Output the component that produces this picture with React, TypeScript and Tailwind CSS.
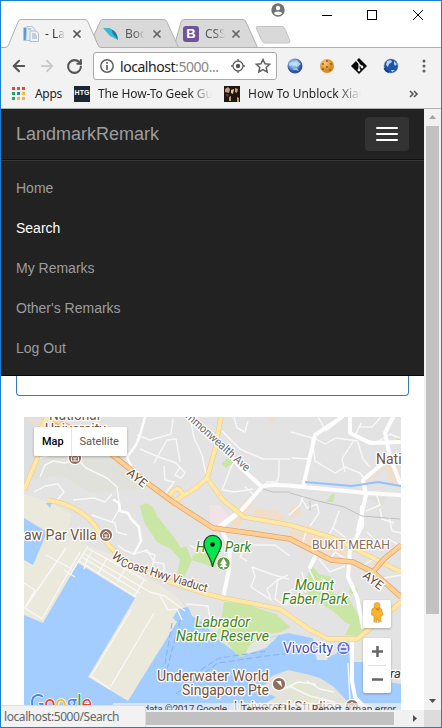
import React from "react";
import { ArrowLeft, ArrowRight, RotateCw, X } from "lucide-react";

const ui = "font-['Noto_Sans','Open_Sans',sans-serif]";

function TabShapes() {
  return (
    <svg className="absolute left-0 top-0" width="440" height="47" viewBox="1 1 440 47">
      <path d="M1 47.5H441" stroke="#b4b4b4" />
      <path d="M174 47L181 22Q182 19.500 184 19.500H243Q245 19.500 246 22L257.500 47.500H170Z" fill="#d9d9d9" stroke="#b0b0b0" />
      <path d="M94 35L100 22Q101 19.500 103 19.500H164Q166 19.500 167 22L178.500 47.500H98Z" fill="#d9d9d9" stroke="#b0b0b0" />
      <path d="M1 48V47.500H5Q7.500 47.500 8.500 45L18 22Q19 19.500 21 19.500H85Q87 19.500 88 22L98 45Q99 47.500 101 47.500V48Z" fill="#f2f2f2" />
      <path d="M1 47.500H5Q7.500 47.500 8.500 45L18 22Q19 19.500 21 19.500H85Q87 19.500 88 22L98 45Q99 47.500 101 47.500" fill="none" stroke="#b0b0b0" />
      <path d="M257 26.500H282Q284 26.500 285 29L290 41Q290 43 288 43H265Q263 43 262 41L256.500 29Q256 26.500 257 26.500Z" fill="#d9d9d9" stroke="#c4c4c4" />
    </svg>
  );
}

function TitleBar() {
  return (
    <header className="relative h-[47px] w-full bg-white">
      <TabShapes />
      <div className="relative flex h-[25px] items-start justify-end">
        <svg className="mr-[36px] mt-[2px]" width="14" height="14" viewBox="0 0 14 14">
          <circle cx="7" cy="7" r="6.700" fill="#737373" />
          <circle cx="7" cy="5" r="2.200" fill="white" />
          <path d="M2.800 10.300Q3.500 8.500 7 8.500T11.200 10.300Q9.500 12.200 7 12.200T2.800 10.300Z" fill="white" />
        </svg>
        <svg className="mr-[18px] mt-[8px]" width="102" height="12" viewBox="321 9 102 12" fill="none" stroke="black">
          <path d="M322 15.500H332" />
          <rect x="367.500" y="10.500" width="9" height="9" />
          <path d="M413 10L423 20M423 10L413 20" />
        </svg>
      </div>
      <div className={`relative flex h-[16px] items-center text-[12px] text-[#444] ${ui}`}>
        <svg className="ml-[22px] shrink-0" width="16" height="16" viewBox="0 0 16 16">
          <path d="M.5 1.500H3.500V14.500H.5Z" fill="#5b9bd0" />
          <path d="M4 .500H9L12 3V14.500H3Z" fill="#e7edf3" stroke="#b3c8dc" />
          <path d="M7 5H13L15.500 7V15.500H7Z" fill="#f1f4f6" stroke="#afbdca" />
          <path d="M5 3H8M9 8H13M9 10H14M9 12H14" stroke="#91a9bf" />
        </svg>
        <span className="ml-[6px] w-[20px] overflow-hidden whitespace-nowrap bg-linear-to-r from-[#333] from-50% to-transparent bg-clip-text text-transparent">- La</span>
        <X className="ml-[6px]" size={12} strokeWidth={3.500} color="#555" />
        <svg className="ml-[20px] shrink-0" width="16" height="16" viewBox="0 0 16 16">
          <path d="M0 2H7L14 12L15 14L7 10Z" fill="#36bad5" /><path d="M8 3Q15 6 15 14L10 8Z" fill="#247d94" />
        </svg>
        <span className="ml-[6px] w-[20px] overflow-hidden whitespace-nowrap bg-linear-to-r from-[#555] from-50% to-transparent bg-clip-text text-transparent">Boo</span>
        <X className="ml-[6px]" size={12} strokeWidth={3.500} color="#666" />
        <span className="ml-[20px] flex size-4 items-center justify-center rounded-[3px] bg-[#6f5499] font-['Liberation_Sans',sans-serif] text-[13px] font-bold text-white">B</span>
        <span className="ml-[6px] w-[20px] overflow-hidden whitespace-nowrap bg-linear-to-r from-[#555] from-50% to-transparent bg-clip-text text-transparent">CSS</span>
        <X className="ml-[5px]" size={12} strokeWidth={3.500} color="#666" />
      </div>
    </header>
  );
}

function ExtensionIcons() {
  return (
    <svg className="ml-[9px]" width="145" height="20" viewBox="286 56 145 20">
      <defs>
        <radialGradient id="globe" cx=".42" cy=".36"><stop stopColor="#cdeafa" /><stop offset=".55" stopColor="#74a8df" /><stop offset="1" stopColor="#3151a0" /></radialGradient>
        <radialGradient id="cookie" cx=".35" cy=".3"><stop stopColor="#f8cc72" /><stop offset="1" stopColor="#d98c28" /></radialGradient>
      </defs>
      <circle cx="295" cy="66" r="7.500" fill="url(#globe)" />
      <path d="M289 63L293 62L292 65L289 66M296 60L301 64L297 67L294 64M292 69L297 68L299 71" fill="#d8eefb" opacity=".65" />
      <circle cx="327" cy="66" r="7" fill="url(#cookie)" />
      {[[323, 64], [327, 61], [331, 64], [327, 67], [323, 69], [330, 70]].map(([x, y]) => <circle key={`${x}-${y}`} cx={x} cy={y} r=".900" fill="#944d12" />)}
      <path d="M359 58L367 66L359 74L351 66Z" fill="#080808" />
      <path d="M356 60L359 63.500V70M359 64L362 67" stroke="#f2f2f2" strokeWidth="1.200" /><circle cx="359" cy="70" r="1.400" fill="#f2f2f2" /><circle cx="362" cy="67" r="1.400" fill="#f2f2f2" />
      <circle cx="391" cy="66" r="7" fill="#1d54aa" stroke="#73899e" strokeWidth=".500" />
      <path d="M387 61L391 60L392 62L389 64L388 67L386 65M394 61L397 64L395 66L394 64M391 70L395 70L392 72" fill="#b9d7ed" />
      <path d="M384.500 68Q386 72 389 72" stroke="#123d87" strokeWidth="2" fill="none" />
      {[61, 66, 71].map((y) => <circle key={y} cx="424" cy={y} r="1.500" fill="#606060" />)}
    </svg>
  );
}

function Toolbar() {
  return (
    <div className="flex h-[36px] items-center bg-[#f2f2f2]">
      <ArrowLeft className="ml-[9px]" size={18} strokeWidth={2.700} color="#555" />
      <ArrowRight className="ml-[10px]" size={18} strokeWidth={2.500} color="#ccc" />
      <RotateCw className="ml-[10px]" size={17} strokeWidth={2.900} color="#555" />
      <div className={`ml-[10px] flex h-[28px] w-[184px] items-center rounded-[3px] border border-[#a9a9a9] bg-white text-[14px] ${ui}`}>
        <svg className="ml-[5px]" width="16" height="16" viewBox="0 0 16 16">
          <circle cx="8" cy="8" r="6.200" fill="none" stroke="#606060" strokeWidth="1.500" /><path d="M8 7V12M8 4V5.700" stroke="#606060" strokeWidth="1.700" />
        </svg>
        <span className="ml-[5px] w-[105px] whitespace-nowrap tracking-[-0.45px] text-[#222]">localhost<span className="text-[#888]">:5000...</span></span>
        <svg className="ml-[5px]" width="44" height="16" viewBox="230 58 44 16" fill="none" stroke="#606060" strokeWidth="1.300">
          <circle cx="238" cy="66" r="5" /><circle cx="238" cy="66" r="2.200" fill="#555" stroke="none" /><path d="M238 59V61M238 71V73M231 66H233M243 66H245" />
          <path d="M263 59.500L265 63.800L269.600 64.300L266.200 67.400L267.200 72L263 69.600L258.800 72L259.800 67.400L256.400 64.300L261 63.800Z" strokeWidth="1.500" />
        </svg>
      </div>
      <ExtensionIcons />
    </div>
  );
}

function Bookmarks() {
  const dots = ["#e34b3d", "#e34b3d", "#e34b3d", "#26a65b", "#1388dc", "#f1b83e", "#26a65b", "#f1b83e", "#f1b83e"];
  return (
    <div className={`flex h-[25px] items-center border-b border-[#b1b1b1] bg-[#f2f2f2] pb-[5px] text-[12px] text-[#222] ${ui}`}>
      <span className="ml-[11px] grid shrink-0 grid-cols-3 gap-[2px]">{dots.map((color, i) => <i key={i} className="size-[3px]" style={{ backgroundColor: color }} />)}</span>
      <span className="ml-[10px] w-[29px] tracking-[-0.3px]">Apps</span>
      <span className="ml-[10px] flex size-4 items-center justify-center bg-[#192635] font-['Liberation_Sans',sans-serif] text-[7px] font-bold text-white">HTG</span>
      <span className="ml-[8px] w-[114px] overflow-hidden whitespace-nowrap bg-linear-to-r from-[#222] from-80% to-transparent bg-clip-text tracking-[-0.12px] text-transparent">The How-To Geek Gu</span>
      <svg className="ml-[12px] shrink-0" width="16" height="16" viewBox="0 0 16 16">
        <path d="M0 0H16V16H0Z" fill="#21160f" /><path d="M1 3L4 1L6 3L5 7L1 6M11 2L14 3L13 7L11 6M5 11L7 10V15H5M13 11L15 12V16H13" fill="#bf9978" /><path d="M7 4L10 3L9 8L7 7" fill="#e0c59f" /><path d="M2 8L5 9L3 11" fill="#754a34" />
      </svg>
      <span className="ml-[8px] w-[113px] overflow-hidden whitespace-nowrap bg-linear-to-r from-[#222] from-80% to-transparent bg-clip-text text-transparent">How To Unblock Xiao</span>
      <svg className="ml-[48px]" width="10" height="8" viewBox="0 0 10 8" fill="none" stroke="#555" strokeWidth="1.600"><path d="M1 1L4 4L1 7M5 1L8 4L5 7" /></svg>
    </div>
  );
}

function Navigation() {
  const items = ["Home", "Search", "My Remarks", "Other's Remarks", "Log Out"];
  return (
    <nav className="h-[267px] shrink-0 border-b border-[#080808] bg-[#222] font-['Liberation_Sans',Arial,sans-serif] text-[#9d9d9d]">
      <div className="flex h-[51px] items-center justify-between border-b border-[#101010] pl-[15px] pr-[15px] text-[18px]">
        <span>LandmarkRemark</span>
        <button className="flex h-[34px] w-[44px] flex-col items-center justify-center gap-[4px] rounded-[4px] bg-[#333]" aria-label="Navigation menu">
          <i className="h-[2px] w-[22px] rounded-[1px] bg-white" /><i className="h-[2px] w-[22px] rounded-[1px] bg-white" /><i className="h-[2px] w-[22px] rounded-[1px] bg-white" />
        </button>
      </div>
      <div className="border-t border-[#383838] pt-[7px] text-[14px]">
        {items.map((item) => <div key={item} className={`flex h-[40px] items-center pl-[15px] ${item === "Search" ? "text-white" : ""}`}>{item}</div>)}
      </div>
    </nav>
  );
}

function MapDrawing() {
  return (
    <svg width="377" height="293" viewBox="24 417 377 293" className="block font-['Roboto',sans-serif]">
      <rect x="24" y="417" width="377" height="293" fill="#e3e3e3" />
      <path d="M24 417H46L39 450L37 464L24 490Z" fill="#dddedf" />
      <path d="M43 450L78 445L110 458L149 488L91 493L61 475L31 480Z" fill="#dfe1da" />
      <path d="M24 494L49 502L72 514L67 535L87 545L112 555L174 594L195 618L177 622L128 701L88 677L135 598L78 563L43 623L24 615Z" fill="#ebe8dc" />
      <g fill="#a3ccff">
        <path d="M24 518L47 532L33 565L24 560Z" />
        <path d="M78 563L135 598L88 677L128 701L177 622L173 618L178 609L188 607L192 616L201 621L210 630L221 642L243 657L249 645L264 639L288 633L312 638L323 656L334 655L349 643H376L370 651L365 666L370 679L401 684V710H24V615L43 623Z" />
        <path d="M46 503L52 503L50 508Z" />
      </g>
      <path d="M264 655L320 645L323 656L331 663L336 659L349 643L350 667L320 663L290 659L266 665Z" fill="#a3ccff" />
      <path d="M239 657L250 643L278 636L266 648ZM348 642L376 638L369 645L363 662L350 662Z" fill="#e6e6e1" />
      <path d="M315 653L321 647L330 652L327 660L317 660Z" fill="#e6e6e1" />
      <path d="M384 662L392 652L401 650V669L388 672Z" fill="#e3e3e3" />
      <path d="M254 688L266 684L272 676L288 670L306 674L320 678L334 687L348 702L368 704L377 710H254L276 697Z" fill="#e4e3db" />
      <path d="M285 683Q296 675 309 683L312 691L330 705L311 705L294 696Z" fill="#e4e6d4" />

      <g fill="#cae6a4">
        <path d="M140 506Q151 498 157 516L173 536L181 548L186 546L192 560L184 578L177 575L180 559L171 549L157 542L144 522Z" />
        <path d="M191 560L197 550L211 547L219 553L215 568L201 563Z" />
        <path d="M224 602L245 604L276 614L290 627L281 632L262 635L250 645L243 657L235 653L226 640L216 636L221 622Z" />
        <path d="M312 566L319 574L331 577L334 594L347 596L355 609L362 622L363 628L346 623L333 611L308 596L306 579Z" />
        <path d="M224 461L231 457L235 462L226 468L222 464ZM332 494L335 494L333 502L326 502ZM396 439L400 437V444ZM350 588L357 588L358 595L349 593Z" />
        <path d="M355 615L365 629L360 636L345 635Z" />
      </g>
      <path d="M209 505L219 505L229 516L226 527L211 528Z" fill="#f2e3e8" />
      <g fill="#f1deca">
        <path d="M245 500L253 504L244 517L239 528L230 525L237 510ZM255 507L278 511L286 520L276 523L253 518ZM290 530L309 525L323 533L345 538L349 556L321 552L290 538ZM290 508L300 504L301 514L291 519ZM365 481L389 464L400 467L400 488L389 480L387 468L367 483ZM24 419H46L44 431L40 426ZM58 420L79 428L74 435L55 427ZM265 417H279L272 424Z" />
      </g>
      <path d="M365 497H387L382 506Z" fill="#dfe1d8" />

      <g fill="none" stroke="#f8f8f8" strokeWidth="1.400" strokeLinejoin="round">
        <path d="M40 477L45 465L53 461L65 463L78 459L86 468L107 478L117 487L120 508L112 522M34 492L45 486L58 484L64 492L57 500M73 500L94 498L105 502L112 494M92 515L103 519L115 523L117 532L127 535M35 460L56 453" />
        <path d="M137 435L150 440L171 434L173 419M140 449L159 457L176 463L185 473L181 478L175 475L180 467M154 463L167 440L176 439L180 462M164 466L165 480L174 482L163 497M190 417L194 438L202 455L207 479M234 417L237 428L245 432L248 421M222 431L240 449L263 459H290M291 432L312 438L315 461L335 473L345 467L360 473L363 477M316 439L325 444L336 438L358 441M354 440L342 459L345 472M358 442L363 459L370 467" />
        <path d="M235 459L230 470L225 483L222 490M245 487L254 495L267 482L277 482L279 475L279 460M291 458L310 459M318 417L326 431L340 420M361 423L355 436L376 443M376 443L390 434L400 438M381 417L372 427L359 427M221 448L231 454M223 490L234 492L253 489M224 448L232 460L239 458" />
        <path d="M302 499L307 508L317 504L319 513L310 526M339 511L333 528L346 538M289 515L300 505L303 496M376 493L380 505L366 511M394 523L382 519L380 509M326 541L336 521M389 517L392 531L401 533M367 532L377 542L389 539L400 546M306 532L302 545" />
        <path d="M252 567L255 576L251 587L271 600L267 589L276 581L288 575M252 567L274 575L289 579M238 545H275L290 556M245 548L240 557L247 561M199 551L190 545M278 578L275 599L284 605M144 551L155 555L152 568L165 574L156 578M118 545L124 550L134 554L147 550L154 562L164 564L164 579" />
        <path d="M83 553L150 592L165 596L185 611M87 548L147 581M82 557L140 593M79 561L136 597M92 551L87 560L84 569M107 558L98 574M125 569L117 582M144 580L134 597M88 546L70 575M46 555L72 569M66 548L25 608L42 619L80 552M64 570L75 577M24 583L35 590L25 608" />
        <path d="M131 610L91 676L110 689M154 613L111 686M160 596L168 610L177 609L182 620M186 604L208 606L210 619" />
        <path d="M289 686L310 696L334 702L340 710M348 663L350 700L361 710M307 681L320 689L334 692M282 690L298 682L316 684" />
        <path d="M309 569L316 584L324 593L331 585L321 578M286 606L290 591L304 581L302 572M380 592L384 578L401 575M319 559L330 572L345 566M364 565L375 558L400 574M328 562L335 552L352 563" />
      </g>

      <g fill="none" stroke="#fdfdfd" strokeWidth="4" strokeLinecap="round" strokeLinejoin="round">
        <path d="M187 413L220 443L240 467L262 487Q270 483 303 487L367 493L400 495M262 487L240 512L220 528M237 513L220 526L230 548L229 570L223 598" />
        <path d="M342 417L315 435L303 487M350 417V433L370 443L401 442M393 417L385 433L390 457L363 480L366 495L358 530M362 507V526L350 550L348 577L357 597L363 627M390 457L400 483" />
        <path d="M352 642V681L355 697L367 710M316 555L310 567" />
        <path strokeWidth="2.500" d="M114 500L119 503L120 511L128 513L131 519L139 527L141 541L134 554M145 417L140 435L136 445L127 457L132 469" />
      </g>
      <path d="M305 482L352 486L378 482L401 486" fill="none" stroke="#91c2ff" strokeWidth="2" />
      <path d="M290 493L318 501L344 507L362 516L400 519M263 489L273 492H290M310 501V511" stroke="#bec0c1" fill="none" strokeWidth="1" />
      <g fill="none" strokeLinejoin="round">
        <g stroke="#eacb83" strokeWidth="5">
          <path d="M47 417L40 431L37 459L24 490M50 417L68 429M48 500Q77 505 93 523L110 547L133 567L170 582L207 594L223 598L250 603L280 609L310 630L328 639L357 639L374 625L401 602M221 417L215 450L207 478L223 500L244 517L290 525L333 538L401 572M207 478L197 487L170 504M168 499Q177 481 183 495L177 500" />
        </g>
        <g stroke="#ffe7a7" strokeWidth="4">
          <path d="M47 417L40 431L37 459L24 490M50 417L68 429M48 500Q77 505 93 523L110 547L133 567L170 582L207 594L223 598L250 603L280 609L310 630L328 639L357 639L374 625L401 602M221 417L215 450L207 478L223 500L244 517L290 525L333 538L401 572M207 478L197 487L170 504M168 499Q177 481 183 495L177 500" />
        </g>
        <path d="M54 420L71 428L110 453L150 485L173 502L213 528L250 533L290 539L331 560L353 562L373 572L401 597M373 572L384 559L401 545" stroke="#e5a263" strokeWidth="5.500" />
        <path d="M54 420L71 428L110 453L150 485L173 502L213 528L250 533L290 539L331 560L353 562L373 572L401 597M373 572L384 559L401 545" stroke="#ffcf94" strokeWidth="4" />
      </g>
      <path d="M172 623L165 664M180 620L172 650L167 670M176 694L218 663L266 656L327 649M193 675L219 658L268 651" stroke="#86b2f5" strokeDasharray="6 3" fill="none" />

      <g stroke="#fff" strokeWidth="2.600" strokeLinejoin="round" style={{ paintOrder: "stroke" }}>
        <g fill="#74513b" fontSize="14">
          <text x="49" y="420" textLength="51" lengthAdjust="spacingAndGlyphs">National</text>
          <text x="45" y="434" textLength="61" lengthAdjust="spacingAndGlyphs">University</text>
          <text x="24" y="540" textLength="73" lengthAdjust="spacingAndGlyphs">aw Par Villa</text>
          <text x="376" y="464">National</text>
          <text x="312" y="549" fontSize="13" textLength="78" lengthAdjust="spacingAndGlyphs" fill="#87705c">BUKIT MERAH</text>
          <text x="157" y="681" textLength="112" lengthAdjust="spacingAndGlyphs">Underwater World</text>
          <text x="182" y="695" textLength="87" lengthAdjust="spacingAndGlyphs">Singapore Pte</text>
          <text x="234" y="712" textLength="107" lengthAdjust="spacingAndGlyphs">Universal Studios</text>
        </g>
        <g fill="#3f8418" fontSize="14" fontStyle="italic">
          <text x="196" y="552" textLength="55" lengthAdjust="spacingAndGlyphs">Hort Park</text>
          <text x="195" y="627" textLength="55" lengthAdjust="spacingAndGlyphs">Labrador</text><text x="176" y="641" textLength="93" lengthAdjust="spacingAndGlyphs">Nature Reserve</text>
          <text x="295" y="590" textLength="39" lengthAdjust="spacingAndGlyphs">Mount</text><text x="282" y="604" textLength="66" lengthAdjust="spacingAndGlyphs">Faber Park</text>
        </g>
        <text x="283" y="653" fontSize="14" fill="#3f45b5" textLength="50" lengthAdjust="spacingAndGlyphs">VivoCity</text>
        <text x="390" y="678" fontSize="13" fontStyle="italic" fill="#333">ra.</text>
        <g fill="#684735" fontSize="12">
          <text transform="translate(126 474) rotate(40)" textLength="22" lengthAdjust="spacingAndGlyphs">AYE</text>
          <text transform="translate(362 577) rotate(37)" textLength="22" lengthAdjust="spacingAndGlyphs">AYE</text>
          <text transform="translate(111 557) rotate(42)">W</text>
          <text transform="translate(120 566) rotate(17)" textLength="90" lengthAdjust="spacingAndGlyphs">Coast Hwy Viaduct</text>
        </g>
        <text transform="translate(185 417) rotate(42)" fontSize="11.500" fill="#686868" textLength="82" lengthAdjust="spacingAndGlyphs">mmonwealth Ave</text>
      </g>
      {[[75, 458], [106, 535], [279, 684], [352, 706]].map(([x, y]) => (
        <g key={`${x}-${y}`}><circle cx={x} cy={y} r="6.700" fill="#916d5d" stroke="white" strokeWidth="1.200" />{x === 279
          ? <path d={`M${x - 3} ${y - 3}H${x + 2}L${x + 3} ${y + 3}L${x} ${y}Z`} fill="#fff" />
          : <path d={`M${x - 3.500} ${y - 1}L${x} ${y - 4}L${x + 3.500} ${y - 1}V${y + 3}H${x - 3.500}ZM${x - 2} ${y}H${x + 2}M${x} ${y}V${y + 3}`} fill="none" stroke="#fff" strokeWidth=".900" />}</g>
      ))}
      <circle cx="223.500" cy="563.500" r="6.700" fill="#629c43" stroke="#fff" /><path d="M223.500 558L220 564H222L219.500 567H222.700V569H224.300V567H227.500L225 564H227Z" fill="white" />
      <circle cx="343.500" cy="648" r="6.700" fill="#6778dc" stroke="#fff" /><path d="M340 647H347V651H340ZM341.500 647V645Q343.500 642 345.500 645V647" fill="none" stroke="#fff" strokeWidth="1.300" />
      <path d="M212.500 567C211 557 204 551 204 544A8.700 8.700 0 0 1 221.400 544C221.400 551 214 557 212.500 567Z" fill="#00e64d" stroke="#194426" strokeWidth="1.200" /><circle cx="212.500" cy="544.500" r="2.300" fill="#111" />

      <rect x="113" y="703" width="288" height="7" fill="#f5f5f5" fillOpacity=".65" />
      <g fontSize="24" className="font-['Lato',sans-serif]" stroke="white" strokeWidth="1.500" style={{ paintOrder: "stroke" }}>
        <text x="30" y="711" textLength="62" lengthAdjust="spacingAndGlyphs"><tspan fill="#4285f4">G</tspan><tspan fill="#ea4335">o</tspan><tspan fill="#fbbc05">o</tspan><tspan fill="#4285f4">g</tspan><tspan fill="#34a853">l</tspan><tspan fill="#ea4335">e</tspan></text>
      </g>
      <g fontSize="10" fill="#444"><text x="122" y="713" textLength="105">Map data ©2017 Google</text><text x="241" y="713" textLength="60">Terms of Use</text><text x="312" y="713" textLength="84">Report a map error</text></g>
      <g filter="drop-shadow(0 1px 1px #0004)">
        <rect x="34" y="427" width="93" height="29" rx="1.500" fill="white" />
        <rect x="363" y="600" width="28" height="28" rx="2" fill="white" />
        <rect x="363" y="638" width="28" height="55" rx="2" fill="white" />
      </g>
      <path d="M71.500 427V456" stroke="#e6e6e6" />
      <text x="42" y="445" fontSize="11" fontWeight="500" fill="#000" textLength="21.500" lengthAdjust="spacingAndGlyphs">Map</text><text x="79.500" y="445" fontSize="11" fill="#565656">Satellite</text>
      <path d="M368 665.500H386" stroke="#e1e1e1" /><path d="M372 651.500H383M377.500 646V657M372 679.500H383" stroke="#666" strokeWidth="2.500" />
      <path d="M375 607L372 609L371.500 615L374 616V622H376.500L377 618L378.500 622H380.500L381 616L383 615L381.500 609L379 607Z" fill="#f7b52c" stroke="#cf8b22" strokeWidth=".600" /><circle cx="377" cy="605.500" r="3" fill="#f7b52c" stroke="#ce9130" strokeWidth=".600" /><path d="M375 608.500L378 611L380 608.500" fill="#df782b" /><path d="M373 621Q377 624 382 621" stroke="#bbb" fill="none" />
    </svg>
  );
}

export default function App() {
  return (
    <div className="relative flex h-[728px] w-[442px] flex-col overflow-hidden border border-[#1a80d4] bg-white">
      <TitleBar /><Toolbar /><Bookmarks />
      <div className="flex h-[601px]">
        <main className="flex w-[423px] flex-col bg-white">
          <Navigation />
          <div className="mx-[15px] h-[20px] shrink-0 rounded-b-[4px] border border-t-0 border-[#337ab7]" />
          <div className="mx-[23px] mt-[21px] h-[293px] w-[377px] overflow-hidden"><MapDrawing /></div>
        </main>
        <aside className="flex w-[17px] flex-col items-center bg-[#f1f1f1]">
          <svg width="17" height="17" viewBox="0 0 17 17"><path d="M5 10L8.500 6L12 10Z" fill="#a3a3a3" /></svg>
          <span className="h-[488px] w-[13px] bg-[#c1c1c1]" />
          <svg className="mt-auto" width="17" height="17" viewBox="0 0 17 17"><path d="M5 6L8.500 10L12 6Z" fill="#505050" /></svg>
        </aside>
      </div>
      <div className="flex h-[17px] shrink-0 items-center bg-[#f1f1f1]">
        <span className="ml-[17px] h-[13px] w-[376px] bg-[#c1c1c1]" />
        <svg className="ml-[13px]" width="17" height="17" viewBox="0 0 17 17"><path d="M6 5L10 8.500L6 12Z" fill="#505050" /></svg>
        <span className="h-full w-[17px] bg-[#dcdcdc]" />
      </div>
      <div className={`absolute bottom-0 left-0 flex h-[22px] w-[145px] items-center rounded-tr-[3px] border-r border-t border-[#ddd] bg-[#f2f2f2] pl-[3px] text-[12px] tracking-[-0.42px] text-[#666] ${ui}`}>localhost:5000/Search</div>
    </div>
  );
}
